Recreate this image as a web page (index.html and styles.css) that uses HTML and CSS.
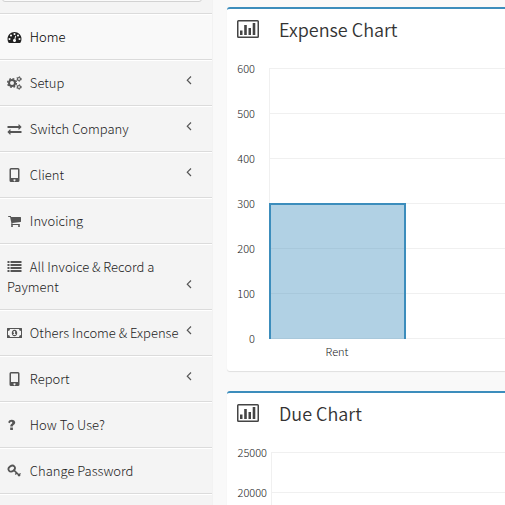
FILE: index.html
```html
<!DOCTYPE html>
<html lang="en">

<head>
    <meta charset="UTF-8">
    <meta name="viewport" content="width=device-width, initial-scale=1.0">
    <title>Dashboard</title>
    <link rel="stylesheet" href="styles.css">
</head>

<body>
    <svg class="sprite" aria-hidden="true">
        <symbol id="i-dashboard" viewBox="0 0 1792 1792"><path d="M384 1152q0-53-37.5-90.5t-90.5-37.5-90.5 37.5-37.5 90.5 37.5 90.5 90.5 37.5 90.5-37.5 37.5-90.5zm192-448q0-53-37.5-90.5t-90.5-37.5-90.5 37.5-37.5 90.5 37.5 90.5 90.5 37.5 90.5-37.5 37.5-90.5zm428 481l101-382q6-26-7.5-48.5t-38.5-29.5-48 6.5-30 39.5l-101 382q-60 5-107 43.5t-63 98.5q-20 77 20 146t117 89 146-20 89-117q16-60-6-117t-72-91zm660-33q0-53-37.5-90.5t-90.5-37.5-90.5 37.5-37.5 90.5 37.5 90.5 90.5 37.5 90.5-37.5 37.5-90.5zm-640-640q0-53-37.5-90.5t-90.5-37.5-90.5 37.5-37.5 90.5 37.5 90.5 90.5 37.5 90.5-37.5 37.5-90.5zm448 192q0-53-37.5-90.5t-90.5-37.5-90.5 37.5-37.5 90.5 37.5 90.5 90.5 37.5 90.5-37.5 37.5-90.5zm320 448q0 261-141 483-19 29-54 29h-1402q-35 0-54-29-141-221-141-483 0-182 71-348t191-286 286-191 348-71 348 71 286 191 191 286 71 348z"/></symbol>
        <symbol id="i-cogs" viewBox="0 0 15 14">
            <g fill="none" stroke="currentColor">
                <circle cx="5" cy="7" r="3" stroke-width="2"/>
                <circle cx="5" cy="7" r="4.4" stroke-width="1.4" stroke-dasharray="1.8 1.656"/>
                <circle cx="12" cy="3" r="1.5" stroke-width="1.2"/>
                <circle cx="12" cy="3" r="2.4" stroke-width="0.8" stroke-dasharray="1.2 1.313"/>
                <circle cx="12" cy="11" r="1.5" stroke-width="1.2"/>
                <circle cx="12" cy="11" r="2.4" stroke-width="0.8" stroke-dasharray="1.2 1.313"/>
            </g>
        </symbol>
        <symbol id="i-exchange" viewBox="0 0 1792 1792"><path d="M1792 1184v192q0 13-9.5 22.5t-22.5 9.5h-1376v192q0 13-9.5 22.5t-22.5 9.5q-12 0-24-10l-319-320q-9-9-9-22 0-14 9-23l320-320q9-9 23-9 13 0 22.5 9.5t9.5 22.5v192h1376q13 0 22.5 9.5t9.5 22.5zm0-544q0 14-9 23l-320 320q-9 9-23 9-13 0-22.5-9.5t-9.5-22.5v-192h-1376q-13 0-22.5-9.5t-9.5-22.5v-192q0-13 9.5-22.5t22.5-9.5h1376v-192q0-14 9-23t23-9q12 0 24 10l319 319q9 9 9 23z"/></symbol>
        <symbol id="i-mobile" viewBox="0 0 14 14"><path fill-rule="evenodd" d="M3.5 0h7A1.5 1.5 0 0 1 12 1.5v11a1.5 1.5 0 0 1-1.5 1.5h-7A1.5 1.5 0 0 1 2 12.5v-11A1.5 1.5 0 0 1 3.5 0zM3.5 1.5V10h7V1.5zM7 11.2a1 1 0 1 0 .01 0z"/></symbol>
        <symbol id="i-cart" viewBox="0 0 1792 1792"><path d="M704 1536q0 52-38 90t-90 38-90-38-38-90 38-90 90-38 90 38 38 90zm896 0q0 52-38 90t-90 38-90-38-38-90 38-90 90-38 90 38 38 90zm128-1088v512q0 24-16.5 42.5t-40.5 21.5l-1044 122q13 60 13 70 0 16-24 64h920q26 0 45 19t19 45-19 45-45 19h-1024q-26 0-45-19t-19-45q0-11 8-31.5t16-36 21.5-40 15.5-29.5l-177-823h-204q-26 0-45-19t-19-45 19-45 45-19h256q16 0 28.5 6.5t19.5 15.5 13 24.5 8 26 5.5 29.5 4.5 26h1201q26 0 45 19t19 45z"/></symbol>
        <symbol id="i-list" viewBox="0 0 14 14"><path d="M0 1h2v2H0zM3 1h11v2H3zM0 4h2v2H0zM3 4h11v2H3zM0 7h2v2H0zM3 7h11v2H3zM0 10h2v2H0zM3 10h11v2H3z"/></symbol>
        <symbol id="i-money" viewBox="0 0 15 14"><path fill-rule="evenodd" d="M.5 2h14a.5.5 0 0 1 .5.5v9a.5.5 0 0 1-.5.5H.5a.5.5 0 0 1-.5-.5v-9A.5.5 0 0 1 .5 2zM3 3a2 2 0 0 1-2 2v4a2 2 0 0 1 2 2h9a2 2 0 0 1 2-2V5a2 2 0 0 1-2-2zM7.5 3.8c1.7 0 2.7 1.4 2.7 3.2s-1 3.2-2.7 3.2S4.8 8.8 4.8 7s1-3.2 2.7-3.2zM7 5L6 6v.6h.9v1.7H6v.8h3v-.8h-.9V5z"/></symbol>
        <symbol id="i-question" viewBox="0 0 14 14"><path d="M.6 4.2C1.3 2.5 2.5 1.7 4.2 1.7c2 0 3.5 1.1 3.5 2.9 0 2.3-2.4 2.3-2.4 3.8H2.8c0-2.5 2-2.5 2-3.7 0-.6-.4-.9-1-.9-.7 0-1 .5-1.5 1.4zM2.7 9.6h2.7v2.5H2.7z"/></symbol>
        <symbol id="i-key" viewBox="0 0 14 14">
            <g fill="none" stroke="currentColor">
                <ellipse cx="4.2" cy="4.6" rx="3.4" ry="2.7" stroke-width="1.8" transform="rotate(-38 4.2 4.6)"/>
                <path stroke-width="1.6" d="M6 5.8l6.5 6.2"/>
                <path stroke-width="1.4" d="M9.4 8.8l-1.6 1.6M13 9.4l-2.4 2.6"/>
            </g>
        </symbol>
        <symbol id="i-angle" viewBox="0 0 6 10"><path fill="none" stroke="currentColor" stroke-width="1.2" d="M5 1.5L1.3 5.2 5 9"/></symbol>
        <symbol id="i-chart" viewBox="0 0 22 18"><path fill-rule="evenodd" d="M1.5 0h19A1.5 1.5 0 0 1 22 1.5v15a1.5 1.5 0 0 1-1.5 1.5h-19A1.5 1.5 0 0 1 0 16.5v-15A1.5 1.5 0 0 1 1.5 0zM1.5 1.5v15h19v-15zM3 10.5h2.5V15H3zM7.2 5h2.6v10H7.2zM11.5 8H14v7h-2.5zM15.7 3h2.6v12h-2.6z"/></symbol>
    </svg>

    <div class="wrapper">
        <aside class="sidebar">
            <form class="search-form">
                <input type="text" aria-label="Search">
            </form>
            <ul class="menu">
                <li class="active"><a href="#"><svg class="icon"><use href="#i-dashboard"/></svg> Home</a></li>
                <li><a href="#"><svg class="icon"><use href="#i-cogs"/></svg> Setup<svg class="angle"><use href="#i-angle"/></svg></a></li>
                <li><a href="#"><svg class="icon"><use href="#i-exchange"/></svg> Switch Company<svg class="angle"><use href="#i-angle"/></svg></a></li>
                <li><a href="#"><svg class="icon"><use href="#i-mobile"/></svg> Client<svg class="angle"><use href="#i-angle"/></svg></a></li>
                <li><a href="#"><svg class="icon"><use href="#i-cart"/></svg> Invoicing</a></li>
                <li><a href="#"><svg class="icon"><use href="#i-list"/></svg> All Invoice &amp; Record a Payment<svg class="angle"><use href="#i-angle"/></svg></a></li>
                <li><a href="#"><svg class="icon"><use href="#i-money"/></svg> Others Income &amp; Expense<svg class="angle"><use href="#i-angle"/></svg></a></li>
                <li><a href="#"><svg class="icon"><use href="#i-mobile"/></svg> Report<svg class="angle"><use href="#i-angle"/></svg></a></li>
                <li><a href="#"><svg class="icon"><use href="#i-question"/></svg> How To Use?</a></li>
                <li><a href="#"><svg class="icon"><use href="#i-key"/></svg> Change Password</a></li>
            </ul>
        </aside>

        <main class="content">
            <section class="box">
                <div class="box-header">
                    <svg class="box-icon"><use href="#i-chart"/></svg>
                    <h3>Expense Chart</h3>
                </div>
                <svg class="chart" role="img" aria-label="Expense Chart">
                    <g class="grid">
                        <line x1="42" y1="15" x2="42" y2="286"/>
                        <line x1="42" y1="15" x2="100%" y2="15"/>
                        <line x1="42" y1="60" x2="100%" y2="60"/>
                        <line x1="42" y1="105" x2="100%" y2="105"/>
                        <line x1="42" y1="150" x2="100%" y2="150"/>
                        <line x1="42" y1="195" x2="100%" y2="195"/>
                        <line x1="42" y1="240" x2="100%" y2="240"/>
                        <line x1="42" y1="285" x2="100%" y2="285"/>
                    </g>
                    <path class="bar" d="M43 286V151h135v135"/>
                    <g class="ticks">
                        <text x="28" y="20">600</text>
                        <text x="28" y="65">500</text>
                        <text x="28" y="110">400</text>
                        <text x="28" y="155">300</text>
                        <text x="28" y="200">200</text>
                        <text x="28" y="245">100</text>
                        <text x="28" y="290">0</text>
                    </g>
                    <text class="category" x="110" y="303">Rent</text>
                </svg>
            </section>

            <section class="box">
                <div class="box-header">
                    <svg class="box-icon"><use href="#i-chart"/></svg>
                    <h3>Due Chart</h3>
                </div>
                <svg class="chart" role="img" aria-label="Due Chart">
                    <g class="grid">
                        <line x1="44" y1="15" x2="44" y2="286"/>
                        <line x1="44" y1="15" x2="100%" y2="15"/>
                        <line x1="44" y1="55" x2="100%" y2="55"/>
                    </g>
                    <g class="ticks">
                        <text x="40" y="20">25000</text>
                        <text x="40" y="60">20000</text>
                    </g>
                </svg>
            </section>
        </main>
    </div>
</body>

</html>
```

FILE: styles.css
```css
* {
    box-sizing: border-box;
}

body {
    margin: 0;
    font-family: "Source Sans Pro", "Noto Sans CJK SC", sans-serif;
    font-size: 13px;
    font-weight: 300;
    line-height: 20px;
    color: #333;
    background: #f9f9f9;
}

.sprite {
    display: none;
}

.wrapper {
    display: flex;
    height: 100vh;
    overflow: hidden;
}

/* sidebar */
.sidebar {
    flex: 0 0 212px;
    background: #f4f4f4;
    box-shadow: 1px 0 0 #f2f2f2;
}

.search-form {
    display: flex;
    align-items: flex-end;
    height: 14px;
    padding: 0 10px 11px 2px;
    border-bottom: 1px solid #dbdbdb;
    overflow: hidden;
}

.search-form input {
    width: 100%;
    height: 34px;
    border: 1px solid #d2d2d2;
    border-radius: 3px;
    background: #fafafa;
}

.menu {
    list-style: none;
    margin: 0;
    padding: 0;
    border-bottom: 1px solid #fff;
}

.menu li {
    border-top: 1px solid #fff;
    border-bottom: 1px solid #dbdbdb;
}

.menu li.active {
    background: #f9f9f9;
}

.menu a {
    display: block;
    padding: 12px 10px 12px 7px;
    color: #222;
    text-decoration: none;
}

.menu a::after {
    content: "";
    display: block;
    clear: both;
}

.menu .active a {
    color: #000;
}

.icon {
    width: 15px;
    height: 14px;
    margin-right: 5px;
    vertical-align: -2px;
    color: #555;
    fill: currentColor;
}

.active .icon {
    color: #222;
}

.angle {
    float: right;
    width: 6px;
    height: 10px;
    margin: 2px 10px 0 0;
    color: #555;
}

/* chart boxes */
.content {
    flex: 1;
    min-width: 0;
    padding: 7px 0 0 15px;
}

.box {
    height: 364px;
    margin-bottom: 20px;
    border-top: 2px solid #3c8dbc;
    border-radius: 3px 0 0 3px;
    background: #fff;
    box-shadow: 0 1px 1px rgba(0, 0, 0, 0.1);
}

.box-header {
    display: flex;
    gap: 20px;
    padding: 8px 10px 12px;
}

.box-header h3 {
    margin: 0;
    font-size: 18px;
    font-weight: 350;
    line-height: 24px;
}

.box-icon {
    width: 22px;
    height: 18px;
    margin-top: 3px;
    fill: #444;
}

.chart {
    display: block;
    width: 100%;
    height: 310px;
    font-size: 11px;
    fill: #222;
}

.grid {
    stroke: #f0f0f0;
    shape-rendering: crispEdges;
}

.bar {
    fill: rgba(60, 141, 188, 0.4);
    stroke: #3c8dbc;
    stroke-width: 2;
}

.ticks {
    text-anchor: end;
}

.category {
    text-anchor: middle;
}
```
